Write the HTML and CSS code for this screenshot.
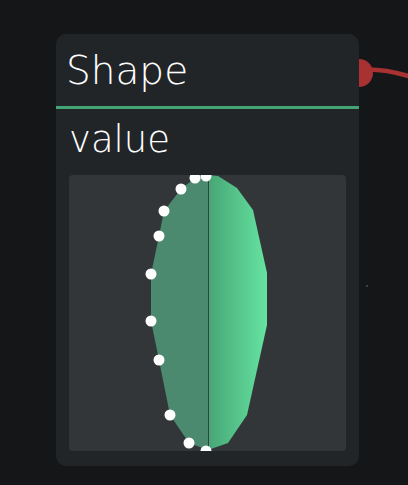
FILE: index.html
```html
<!DOCTYPE html>
<html>
<head>
<meta charset="utf-8">
<link rel="stylesheet" href="styles.css">
</head>
<body>
<svg class="wire" width="68" height="40" viewBox="0 0 68 40">
  <path d="M19 20 C36 18 52 21 72 27" fill="none" stroke="#a83131" stroke-width="4.5"/>
  <circle cx="19" cy="23" r="14" fill="#a83131"/>
</svg>
<span class="speck"></span>
<div class="card">
  <div class="header">Shape</div>
  <div class="body">
    <div class="label">value</div>
    <div class="panel">
      <svg width="277" height="276" viewBox="0 0 277 276">
        <defs>
          <linearGradient id="g" x1="139" y1="0" x2="198" y2="0" gradientUnits="userSpaceOnUse">
            <stop offset="0" stop-color="#46a675"/>
            <stop offset="1" stop-color="#66e3a1"/>
          </linearGradient>
        </defs>
        <polygon points="139,0 126,3 112,14 95,36 90,61 82,99 82,146 90,185 101,240 120,268 139,275" fill="#4b8a6f"/>
        <polygon points="139,0 149,1 168,13 184,35 198,98 198,150 178,240 159,268 139,275" fill="url(#g)"/>
        <line x1="139.5" y1="0" x2="139.5" y2="276" stroke="#3b3d3f" stroke-width="1"/>
        <g fill="#ffffff">
          <circle cx="137" cy="1" r="5.5"/>
          <circle cx="126" cy="3" r="5.5"/>
          <circle cx="112" cy="14" r="5.5"/>
          <circle cx="95" cy="36" r="5.5"/>
          <circle cx="90" cy="61" r="5.5"/>
          <circle cx="82" cy="99" r="5.5"/>
          <circle cx="82" cy="146" r="5.5"/>
          <circle cx="90" cy="185" r="5.5"/>
          <circle cx="101" cy="240" r="5.5"/>
          <circle cx="120" cy="268" r="5.5"/>
          <circle cx="137" cy="276" r="5.5"/>
        </g>
      </svg>
    </div>
  </div>
</div>
</body>
</html>
```
FILE: styles.css
```css
html, body {
  margin: 0;
  padding: 0;
  background: #151618;
  width: 408px;
  height: 485px;
  overflow: hidden;
  position: relative;
}
body {
  padding-top: 34px;
  box-sizing: border-box;
  font-family: "DejaVu Sans ExtraLight", "DejaVu Sans", sans-serif;
}
.wire {
  position: absolute;
  left: 340px;
  top: 50px;
  z-index: 0;
}
.speck {
  position: absolute;
  left: 366px;
  top: 285px;
  width: 2px;
  height: 2px;
  background: #3c3e41;
}
.card {
  position: relative;
  z-index: 1;
  margin-left: 56px;
  width: 303px;
  height: 432px;
  background: #222528;
  border-radius: 10px;
  display: flex;
  flex-direction: column;
  overflow: hidden;
}
.header {
  height: 54px;
  padding: 18px 0 0 10px;
  border-bottom: 3px solid #43a573;
  color: #ffffff;
  font-size: 39px;
  font-weight: 200;
  line-height: 38px;
}
.body {
  padding: 13px 13px 15px 13px;
  display: flex;
  flex-direction: column;
}
.label {
  color: #ffffff;
  font-size: 37px;
  font-weight: 200;
  line-height: 36px;
  height: 36px;
}
.panel {
  margin-top: 17px;
  width: 277px;
  height: 276px;
  background: #333639;
  border-radius: 4px;
  overflow: hidden;
}
.panel svg {
  display: block;
}
```
